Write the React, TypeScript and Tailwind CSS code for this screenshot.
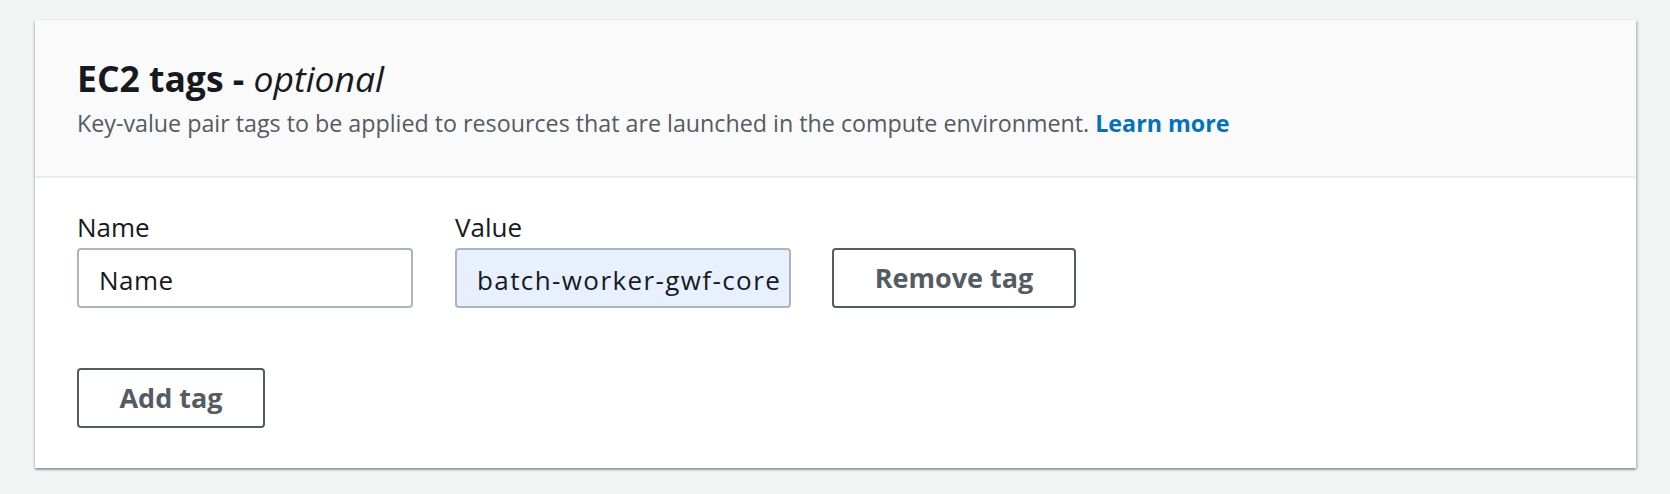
const FONT = "font-['Open_Sans','Liberation_Sans',Arial,sans-serif]";

function Field({
  label,
  value,
  filled,
  tracking = "tracking-[0.5px]",
}: {
  label: string;
  value: string;
  filled?: boolean;
  tracking?: string;
}) {
  return (
    <div className="flex flex-col">
      <label className="text-[26px] leading-[32px] text-[#16191f] mb-[5px]">{label}</label>
      <div
        className={
          "w-[336px] h-[60px] flex items-center pl-[20px] pt-[4px] rounded-[4px] border-2 border-[#aab7b8] text-[26px] text-[#16191f] " +
          tracking +
          " " +
          (filled ? "bg-[#e8f0fe]" : "bg-white")
        }
      >
        {value}
      </div>
    </div>
  );
}

function OutlineButton({ children, width }: { children: string; width: string }) {
  return (
    <button
      className={
        width +
        " h-[60px] rounded-[4px] border-2 border-[#545b64] bg-white text-[27px] font-bold text-[#545b64] flex items-center justify-center"
      }
    >
      {children}
    </button>
  );
}

export default function App() {
  return (
    <div className={"min-h-[494px] bg-[#f2f3f3] pt-[20px] pl-[35px] pr-[34px] pb-[26px] " + FONT}>
      <div className="bg-white shadow-[0_2px_2px_0_rgba(0,28,36,0.3),2px_1px_2px_0_rgba(0,28,36,0.15),-1px_1px_2px_0_rgba(0,28,36,0.12)]">
        <div className="bg-[#fafafa] border-b-2 border-[#eaeded] pl-[42px] pt-[36px] pb-[37px]">
          <h2 className="text-[35.5px] leading-[44px] font-bold text-[#16191f]">
            EC2 tags - <i className="font-normal">optional</i>
          </h2>
          <p className="mt-[7px] text-[23.25px] leading-[32px] text-[#545b64]">
            Key-value pair tags to be applied to resources that are launched in the compute environment.{" "}
            <a className="font-bold text-[#0073bb]">Learn more</a>
          </p>
        </div>
        <div className="pl-[42px] pt-[33px] pb-[40px]">
          <div className="flex items-end gap-[42px]">
            <Field label="Name" value="Name" />
            <Field label="Value" value="batch-worker-gwf-core" filled tracking="tracking-[1.4px]" />
            <OutlineButton width="w-[244px] -ml-px">Remove tag</OutlineButton>
          </div>
          <div className="mt-[60px]">
            <OutlineButton width="w-[188px]">Add tag</OutlineButton>
          </div>
        </div>
      </div>
    </div>
  );
}
